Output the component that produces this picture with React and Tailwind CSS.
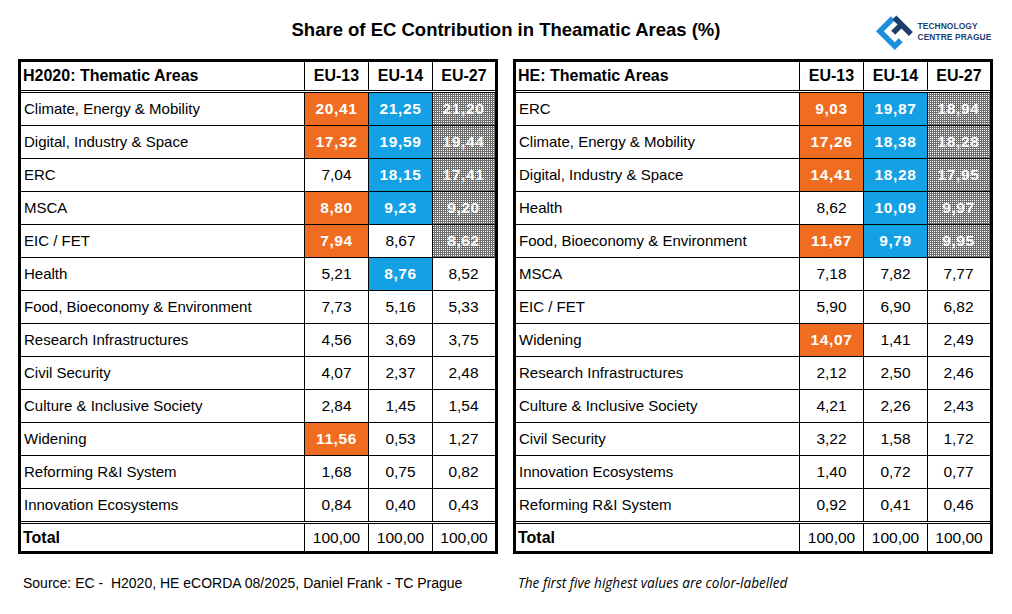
import React from "react";

const h2020 = [
  ["Climate, Energy & Mobility", ["20,41", "o"], ["21,25", "b"], ["21,20", "g"]],
  ["Digital, Industry & Space", ["17,32", "o"], ["19,59", "b"], ["19,44", "g"]],
  ["ERC", ["7,04"], ["18,15", "b"], ["17,41", "g"]],
  ["MSCA", ["8,80", "o"], ["9,23", "b"], ["9,20", "g"]],
  ["EIC / FET", ["7,94", "o"], ["8,67"], ["8,62", "g"]],
  ["Health", ["5,21"], ["8,76", "b"], ["8,52"]],
  ["Food, Bioeconomy & Environment", ["7,73"], ["5,16"], ["5,33"]],
  ["Research Infrastructures", ["4,56"], ["3,69"], ["3,75"]],
  ["Civil Security", ["4,07"], ["2,37"], ["2,48"]],
  ["Culture & Inclusive Society", ["2,84"], ["1,45"], ["1,54"]],
  ["Widening", ["11,56", "o"], ["0,53"], ["1,27"]],
  ["Reforming R&I System", ["1,68"], ["0,75"], ["0,82"]],
  ["Innovation Ecosystems", ["0,84"], ["0,40"], ["0,43"]],
];

const he = [
  ["ERC", ["9,03", "o"], ["19,87", "b"], ["18,94", "g"]],
  ["Climate, Energy & Mobility", ["17,26", "o"], ["18,38", "b"], ["18,28", "g"]],
  ["Digital, Industry & Space", ["14,41", "o"], ["18,28", "b"], ["17,95", "g"]],
  ["Health", ["8,62"], ["10,09", "b"], ["9,97", "g"]],
  ["Food, Bioeconomy & Environment", ["11,67", "o"], ["9,79", "b"], ["9,95", "g"]],
  ["MSCA", ["7,18"], ["7,82"], ["7,77"]],
  ["EIC / FET", ["5,90"], ["6,90"], ["6,82"]],
  ["Widening", ["14,07", "o"], ["1,41"], ["2,49"]],
  ["Research Infrastructures", ["2,12"], ["2,50"], ["2,46"]],
  ["Culture & Inclusive Society", ["4,21"], ["2,26"], ["2,43"]],
  ["Civil Security", ["3,22"], ["1,58"], ["1,72"]],
  ["Innovation Ecosystems", ["1,40"], ["0,72"], ["0,77"]],
  ["Reforming R&I System", ["0,92"], ["0,41"], ["0,46"]],
];

// highlight fills; the gray one keeps the dotted Excel pattern
const fills = {
  o: "bg-[#f06c21] text-white font-bold tracking-[0.6px]",
  b: "bg-[#14a0e4] text-white font-bold tracking-[0.6px]",
  g: "bg-[#6e6e6e] bg-[conic-gradient(at_1px_1px,#ffffff00_0_75%,#ffffff_75%_100%)] bg-size-[2px_2px] text-white font-bold tracking-[0.6px]",
};

const cols = "grid grid-cols-[283px_64px_64px_63px]";

const Cell = ({ value, fill, last }) => (
  <div
    className={`flex items-center justify-center border-l border-black text-[15.5px] ${
      fill ? fills[fill] : ""
    } ${last ? "pr-[1px]" : ""}`}
  >
    {value}
  </div>
);

const AreaTable = ({ title, rows }) => (
  <div className="w-[480px] border-[3px] border-black">
    <div className={`${cols} h-[31px] border-b-[3px] border-double border-black font-bold text-[16px]`}>
      <div className="flex items-center pl-[2px]">{title}</div>
      <div className="flex items-center justify-center border-l border-black">EU-13</div>
      <div className="flex items-center justify-center border-l border-black">EU-14</div>
      <div className="flex items-center justify-center border-l border-black">EU-27</div>
    </div>
    {rows.map((row, i) => (
      <div
        key={row[0]}
        className={`${cols} ${
          i === rows.length - 1
            ? "h-[35px] border-b-[3px] border-double"
            : "h-[33px] border-b"
        } border-black`}
      >
        <div className="flex items-center pl-[3px] text-[15px]">{row[0]}</div>
        {row.slice(1).map(([value, fill], j) => (
          <Cell key={j} value={value} fill={fill} last={j === 2} />
        ))}
      </div>
    ))}
    <div className={`${cols} h-[27px]`}>
      <div className="flex items-center pl-[2px] font-bold text-[16px]">Total</div>
      <Cell value="100,00" />
      <Cell value="100,00" />
      <Cell value="100,00" />
    </div>
  </div>
);

const Logo = () => (
  <div className="flex items-center gap-[3px]">
    <svg width="40" height="40" viewBox="0 0 36 36">
      <g transform="rotate(45 18 18)">
        <path d="M6 10 H11 V24 H25 V19 H30 V29 H6 Z" fill="#1b8fdc" />
        <path d="M9 6 H30 V11 H20.5 V19 H15.5 V11 H9 Z" fill="#1c3d6b" />
      </g>
    </svg>
    <div className="font-['Liberation_Sans',sans-serif] font-bold text-[8.4px] leading-[11px] tracking-[0.1px] text-[#1d3f72]">
      <div>TECHNOLOGY</div>
      <div>CENTRE PRAGUE</div>
    </div>
  </div>
);

export default function App() {
  return (
    <div className="w-[1012px] h-[614px] bg-white text-black font-['Liberation_Sans',Arial,sans-serif]">
      <div className="grid grid-cols-[1fr_auto_1fr] h-[59px] items-center">
        <div />
        <h1 className="text-[18.5px] font-bold">
          Share of EC Contribution in Theamatic Areas (%)
        </h1>
        <div className="pl-[154px] pt-[5px]">
          <Logo />
        </div>
      </div>

      <div className="flex gap-[15px] pl-[18px]">
        <AreaTable title="H2020: Thematic Areas" rows={h2020} />
        <AreaTable title="HE: Thematic Areas" rows={he} />
      </div>

      <div className="flex pl-[23px] mt-[21px] leading-[16px]">
        <span className="w-[495px] text-[14px]">
          Source: EC -&nbsp; H2020, HE eCORDA 08/2025, Daniel Frank - TC Prague
        </span>
        <span className="italic text-[13.6px] font-['Open_Sans',sans-serif]">
          The first five highest values are color-labelled
        </span>
      </div>
    </div>
  );
}
